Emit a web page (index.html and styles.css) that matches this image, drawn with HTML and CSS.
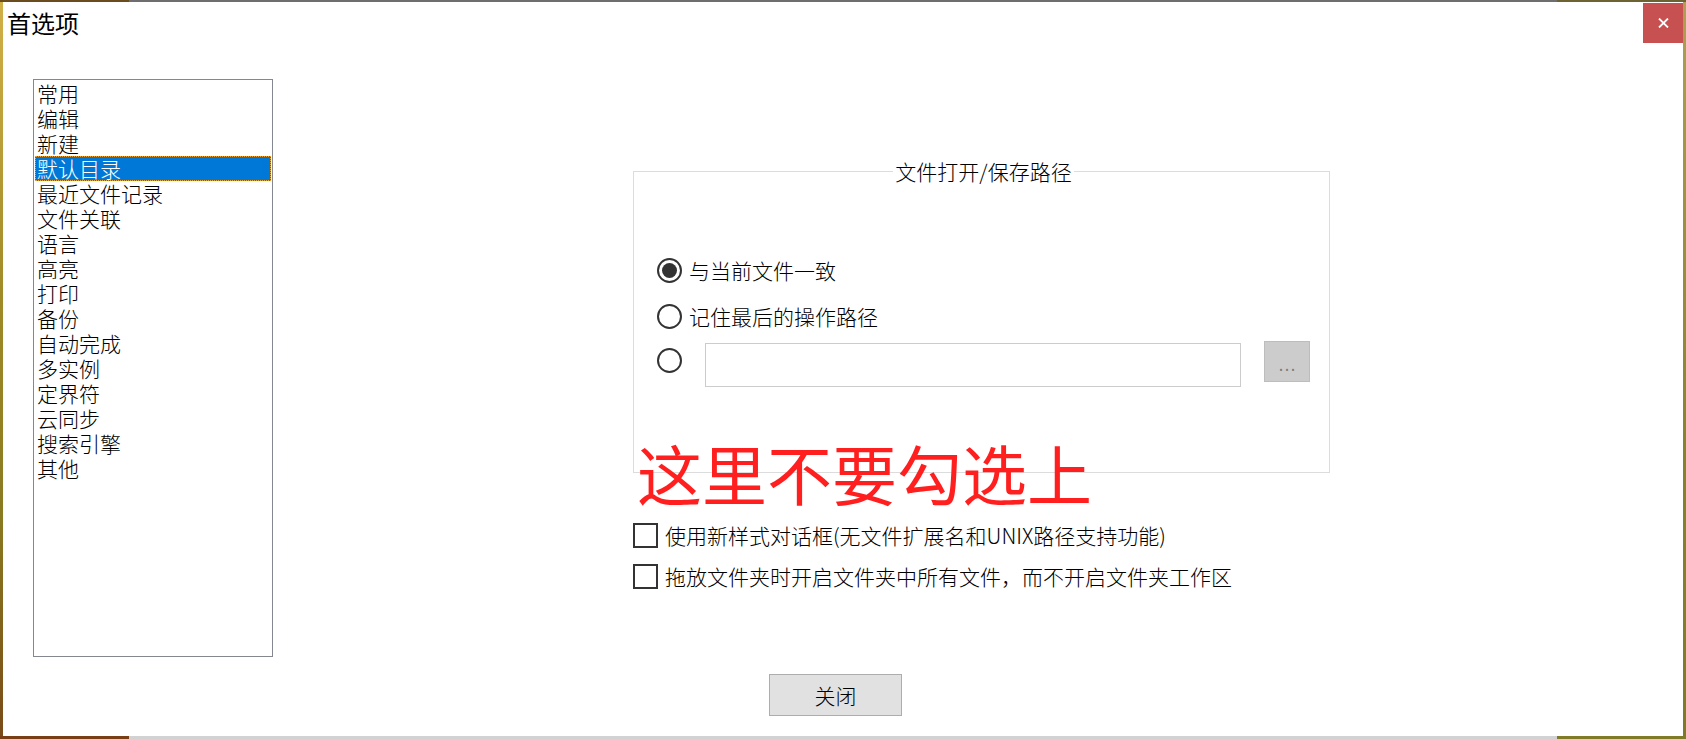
FILE: index.html
```html
<!DOCTYPE html>
<html lang="zh-CN">
<head>
<meta charset="utf-8">
<title>首选项</title>
<link rel="stylesheet" href="styles.css">
</head>
<body>
<div class="window">
  <header class="titlebar">
    <h1 class="title">首选项</h1>
    <button class="close" aria-label="关闭">
      <svg width="11" height="10" viewBox="0 0 11 10"><path d="M1 0.5 L10 9.5 M10 0.5 L1 9.5" stroke="#fff" stroke-width="1.8" fill="none"/></svg>
    </button>
  </header>
  <main class="content">
    <ul class="nav-list">
      <li>常用</li>
      <li>编辑</li>
      <li>新建</li>
      <li class="selected">默认目录</li>
      <li>最近文件记录</li>
      <li>文件关联</li>
      <li>语言</li>
      <li>高亮</li>
      <li>打印</li>
      <li>备份</li>
      <li>自动完成</li>
      <li>多实例</li>
      <li>定界符</li>
      <li>云同步</li>
      <li>搜索引擎</li>
      <li>其他</li>
    </ul>
    <section class="panel">
      <fieldset class="group">
        <legend>文件打开/保存路径</legend>
        <label class="radio-row"><input type="radio" name="path" checked><span class="label-text">与当前文件一致</span></label>
        <label class="radio-row second"><input type="radio" name="path"><span class="label-text">记住最后的操作路径</span></label>
        <div class="radio-row custom"><input type="radio" name="path"><input type="text" class="path-input"><button class="browse">...</button></div>
      </fieldset>
      <div class="checks">
        <label class="check-row"><input type="checkbox"><span class="label-text">使用新样式对话框(无文件扩展名和UNIX路径支持功能)</span></label>
        <label class="check-row second"><input type="checkbox"><span class="label-text">拖放文件夹时开启文件夹中所有文件，而不开启文件夹工作区</span></label>
      </div>
      <div class="annotation">这里不要勾选上</div>
    </section>
  </main>
  <footer class="footer">
    <button class="btn-close">关闭</button>
  </footer>
</div>
</body>
</html>
```
FILE: styles.css
```css
* { box-sizing: border-box; }

html, body {
  margin: 0;
  height: 739px;
  overflow: hidden;
}

body {
  font-family: "Noto Sans CJK SC", "Noto Sans", sans-serif;
  color: #000;
  background:
    linear-gradient(to right, #6a4c1e 0 129px, #6e6e6e 129px 1557px, #6d6232 1557px) left top / 100% 2px no-repeat,
    linear-gradient(to right, #7a3e16 0 129px, #d2d2d2 129px 1557px, #7f7b26 1557px) left bottom / 100% 3px no-repeat,
    linear-gradient(to bottom, #d2b048, #a08a28 40%, #8a7a20 70%, #7a4a18) left top / 3px 100% no-repeat,
    linear-gradient(to bottom, #b0a050, #8a8428 60%, #807a22) right top / 3px 100% no-repeat,
    #fff;
}

button, input { font: inherit; color: inherit; }

.window {
  margin: 2px 0 0 3px;
  width: 1680px;
  height: 734px;
  background: #fff;
  display: flex;
  flex-direction: column;
}

.titlebar {
  flex: none;
  height: 44px;
  display: flex;
  justify-content: space-between;
  align-items: flex-start;
}

.title {
  margin: 9px 0 0 4px;
  font-size: 24px;
  line-height: 24px;
  font-weight: 400;
}

.close {
  margin-top: 1px;
  width: 40px;
  height: 40px;
  border: 0;
  padding: 0;
  background: #c75050;
  display: flex;
  align-items: center;
  justify-content: center;
}

.content {
  flex: none;
  display: flex;
  align-items: flex-start;
  margin-top: 33px;
  padding-left: 30px;
}

.nav-list {
  list-style: none;
  margin: 0;
  padding: 1px;
  width: 240px;
  height: 578px;
  border: 1px solid #828790;
  font-size: 21px;
  line-height: 25px;
  font-weight: 300;
}

.nav-list li {
  height: 25px;
  padding-left: 2px;
  white-space: nowrap;
}

.nav-list li.selected {
  background: #0078d7;
  color: #fff;
  outline: 1px dotted #f0a030;
  outline-offset: -1px;
}

.panel {
  position: relative;
  margin-left: 360px;
  padding-top: 80px;
}

.group {
  margin: 0;
  width: 697px;
  min-width: 0;
  border: 1px solid #dcdcdc;
  padding: 75px 19px 85px 23px;
}

.group legend {
  margin: 0 auto;
  padding: 0 2px;
  font-size: 21px;
  line-height: 24px;
  font-weight: 300;
}

.radio-row {
  display: flex;
  align-items: center;
  font-size: 21px;
  line-height: 25px;
  font-weight: 300;
}

.radio-row.second { margin-top: 21px; }

.radio-row.custom {
  margin-top: 14px;
  align-items: flex-start;
}

.radio-row input[type="radio"] {
  appearance: none;
  -webkit-appearance: none;
  flex: none;
  margin: 0;
  width: 25px;
  height: 25px;
  border: 2px solid #333;
  border-radius: 50%;
  display: grid;
  place-content: center;
  background: #fff;
}

.radio-row.custom input[type="radio"] { margin-top: 5px; }

.radio-row input[type="radio"]:checked::before {
  content: "";
  display: block;
  width: 15px;
  height: 15px;
  border-radius: 50%;
  background: #333;
}

.label-text { margin-left: 7px; white-space: nowrap; }

.path-input {
  margin-left: 23px;
  flex: 1;
  min-width: 0;
  height: 44px;
  border: 1px solid #cccccc;
  padding: 0 6px;
  background: #fff;
}

.browse {
  margin-left: 23px;
  margin-top: -2px;
  flex: none;
  width: 46px;
  height: 41px;
  padding: 0 0 0 1px;
  background: #cccccc;
  border: 1px solid #bdbdbd;
  color: #7a7a7a;
  font-size: 20px;
  line-height: 41px;
  letter-spacing: 1px;
}

.checks { margin-top: 50px; }

.check-row {
  display: flex;
  align-items: center;
  font-size: 21px;
  line-height: 25px;
  font-weight: 300;
}

.check-row.second { margin-top: 16px; }

.check-row input[type="checkbox"] {
  appearance: none;
  -webkit-appearance: none;
  flex: none;
  margin: 0;
  width: 25px;
  height: 25px;
  border: 2px solid #333;
  background: #fff;
}

.annotation {
  position: absolute;
  left: 4px;
  top: 361px;
  font-size: 65px;
  line-height: 65px;
  color: #ff1f1f;
  white-space: nowrap;
}

.footer {
  flex: none;
  margin-top: 17px;
  padding-left: 766px;
}

.btn-close {
  width: 133px;
  height: 42px;
  padding: 0;
  background: #e1e1e1;
  border: 1px solid #adadad;
  font-size: 21px;
  line-height: 40px;
  font-weight: 300;
}
```
